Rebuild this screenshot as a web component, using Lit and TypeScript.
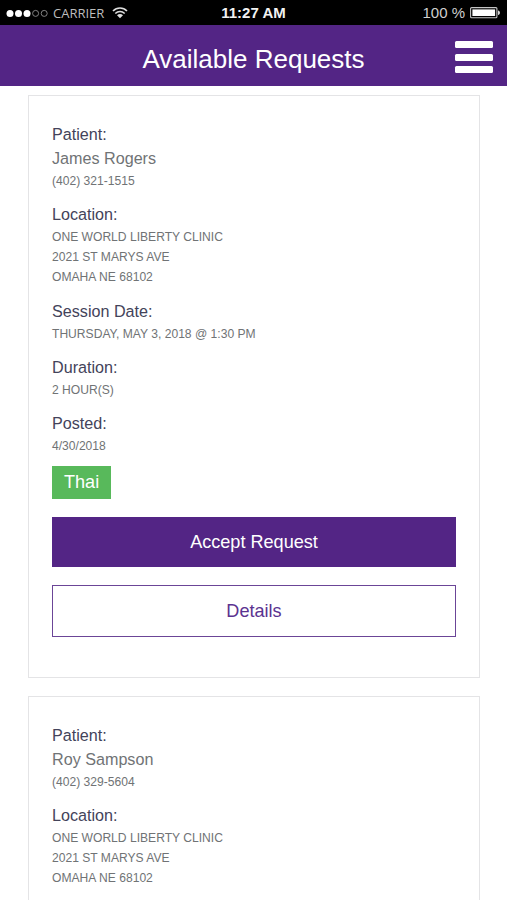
import { LitElement, html, css, svg, nothing } from "lit";
import { customElement } from "lit/decorators.js";

interface Section {
  label: string;
  name?: string;
  lines: string[];
}

interface RequestInfo {
  sections: Section[];
  language?: string;
}

const clinic = ["ONE WORLD LIBERTY CLINIC", "2021 ST MARYS AVE", "OMAHA NE 68102"];

const requests: RequestInfo[] = [
  {
    sections: [
      { label: "Patient:", name: "James Rogers", lines: ["(402) 321-1515"] },
      { label: "Location:", lines: clinic },
      { label: "Session Date:", lines: ["THURSDAY, MAY 3, 2018 @ 1:30 PM"] },
      { label: "Duration:", lines: ["2 HOUR(S)"] },
      { label: "Posted:", lines: ["4/30/2018"] },
    ],
    language: "Thai",
  },
  {
    sections: [
      { label: "Patient:", name: "Roy Sampson", lines: ["(402) 329-5604"] },
      { label: "Location:", lines: clinic },
    ],
  },
];

@customElement("status-bar")
export class StatusBar extends LitElement {
  static styles = css`
    :host {
      display: grid;
      grid-template-columns: 1fr auto 1fr;
      align-items: center;
      box-sizing: border-box;
      height: 25px;
      padding: 0 6px;
      background: #000;
      color: #cfcfcf;
      font-size: 15px;
      line-height: 24px;
    }
    .left {
      display: flex;
      align-items: center;
    }
    .carrier {
      margin: 1px 0 0 4px;
      font-family: "Open Sans", sans-serif;
      font-size: 13px;
      color: #bdbdbd;
    }
    .wifi {
      margin-left: 8px;
    }
    .time {
      color: #f2f2f2;
      font-weight: bold;
      font-size: 15px;
    }
    .right {
      display: flex;
      align-items: center;
      justify-content: flex-end;
      gap: 5px;
    }
    svg {
      display: block;
    }
    .battery {
      margin-top: 1px;
    }
  `;

  render() {
    return html`
      <div class="left">
        <svg width="43" height="10" viewBox="0 0 43 10">
          ${[4, 12.5, 21].map((x) => svg`<circle cx=${x} cy="5.4" r="3.5" fill="#fff" />`)}
          ${[29.6, 38.2].map(
            (x) => svg`<circle cx=${x} cy="5.4" r="3" fill="none" stroke="#8f8f8f" stroke-width="0.9" />`
          )}
        </svg>
        <span class="carrier">CARRIER</span>
        <svg class="wifi" width="16" height="13" viewBox="0 0 16 13">
          <g fill="none" stroke="#dedede" stroke-width="1.6">
            <path d="M1 5C5 1 11 1 15 5" />
            <path d="M3.3 7.5C6 4.9 10 4.9 12.7 7.5" />
          </g>
          <path d="M5 9.3C6.7 7.7 9.3 7.7 11 9.3L8 12.3Z" fill="#dedede" />
        </svg>
      </div>
      <span class="time">11:27 AM</span>
      <div class="right">
        <span>100 %</span>
        <svg class="battery" width="31" height="12" viewBox="0 0 31 12">
          <rect x=".6" y=".6" width="26.3" height="10.2" rx="1" fill="none" stroke="#c4c4c4" stroke-width="1.1" />
          <rect x="2.4" y="2.4" width="22.7" height="6.6" fill="#fff" />
          <path d="M28 3.5C30.6 4 30.6 7.5 28 8Z" fill="#d8d8d8" />
        </svg>
      </div>
    `;
  }
}

@customElement("title-bar")
export class TitleBar extends LitElement {
  static styles = css`
    :host {
      display: grid;
      grid-template-columns: 1fr auto 1fr;
      align-items: center;
      box-sizing: border-box;
      height: 61px;
      padding: 0 14px;
      background: #532585;
      color: #fff;
    }
    .title {
      grid-column: 2;
      margin: 0;
      padding-top: 6px;
      font-size: 26px;
      line-height: 30px;
      font-weight: normal;
    }
    .menu {
      display: flex;
      flex-direction: column;
      justify-self: end;
      gap: 5.4px;
      padding-top: 3px;
    }
    .bar {
      width: 38px;
      height: 7px;
      border-radius: 1.5px;
      background: #fff;
    }
  `;

  render() {
    return html`
      <h1 class="title">Available Requests</h1>
      <div class="menu">
        <div class="bar"></div>
        <div class="bar"></div>
        <div class="bar"></div>
      </div>
    `;
  }
}

@customElement("request-card")
export class RequestCard extends LitElement {
  static properties = { request: { attribute: false } };

  declare request: RequestInfo;

  static styles = css`
    :host {
      display: block;
      box-sizing: border-box;
      height: 583px;
      padding: 25.5px 23px 0;
      border: 1px solid #e4e4e6;
      background: #fff;
    }
    .group {
      margin-bottom: 11px;
      color: #707375;
      font-size: 12.1px;
      line-height: 20.2px;
    }
    .label,
    .name {
      font-size: 16.15px;
      line-height: 24px;
    }
    .label {
      color: #43435a;
    }
    .lines {
      padding-top: 1.1px;
    }
    .badge {
      display: block;
      width: fit-content;
      margin-top: -1px;
      padding: 0 12px;
      background: #58b95b;
      color: #fff;
      font-size: 18.1px;
      line-height: 33px;
    }
    .button {
      box-sizing: border-box;
      margin-top: 18px;
      text-align: center;
      font-size: 18.1px;
      line-height: 50px;
    }
    .primary {
      height: 49.5px;
      background: #532585;
      color: #fff;
    }
    .outline {
      border: 1px solid #6b4597;
      color: #5b3390;
    }
  `;

  render() {
    const { sections, language } = this.request;
    return html`
      ${sections.map(
        (s) => html`
          <div class="group">
            <div class="label">${s.label}</div>
            ${s.name ? html`<div class="name">${s.name}</div>` : nothing}
            <div class="lines">${s.lines.map((line) => html`<div>${line}</div>`)}</div>
          </div>
        `
      )}
      ${language
        ? html`
            <span class="badge">${language}</span>
            <div class="button primary">Accept Request</div>
            <div class="button outline">Details</div>
          `
        : nothing}
    `;
  }
}

@customElement("app-root")
export class AppRoot extends LitElement {
  static styles = css`
    :host {
      display: flex;
      flex-direction: column;
      height: 900px;
      overflow: hidden;
      background: #fff;
      font-family: "Liberation Sans", Arial, sans-serif;
    }
    status-bar,
    title-bar {
      flex: none;
    }
    .list {
      flex: 1;
      min-height: 0;
      display: flex;
      flex-direction: column;
      gap: 18px;
      padding: 9px 27px 0 28px;
      overflow: hidden;
    }
    request-card {
      flex: none;
    }
  `;

  render() {
    return html`
      <status-bar></status-bar>
      <title-bar></title-bar>
      <main class="list">${requests.map((r) => html`<request-card .request=${r}></request-card>`)}</main>
    `;
  }
}
